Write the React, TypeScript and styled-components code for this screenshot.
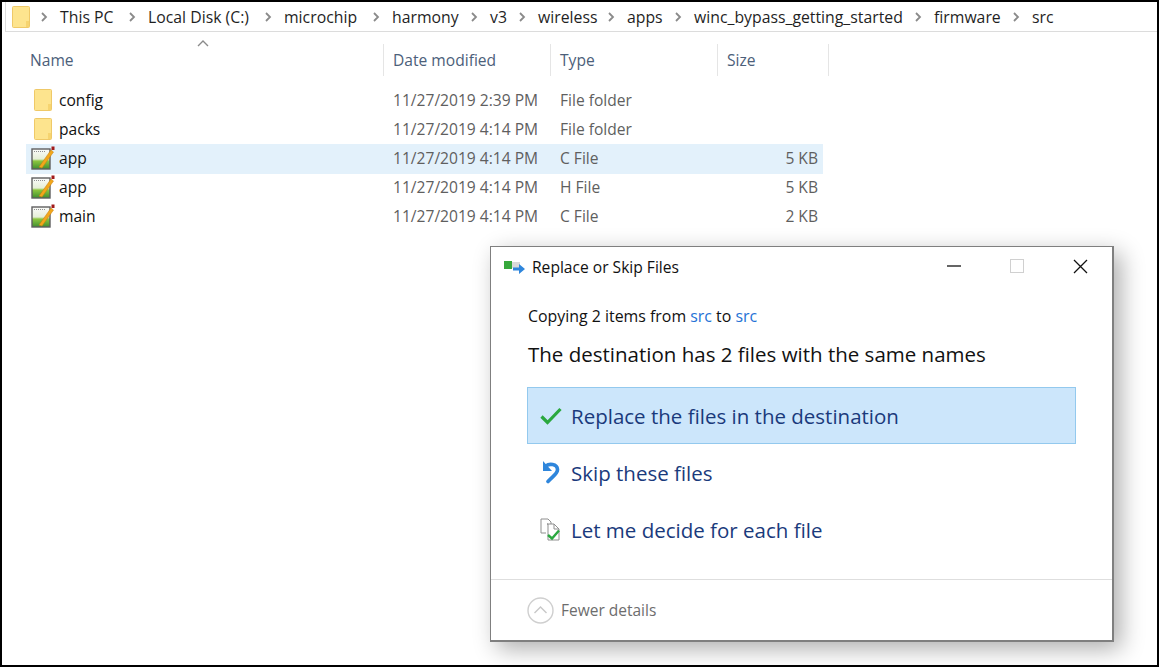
import React from 'react';
import styled, { createGlobalStyle } from 'styled-components';

const GlobalStyle = createGlobalStyle`
  html, body { margin: 0; padding: 0; background: #fff; }
  body { font-family: "Open Sans", "Liberation Sans", sans-serif; }
`;

const Frame = styled.div`
  width: 1159px;
  height: 667px;
  box-sizing: border-box;
  border: 2px solid #000;
  background: #fff;
  position: relative;
  overflow: hidden;
`;

const AddressBar = styled.div`
  height: 30px;
  margin-left: 3px;
  box-sizing: border-box;
  border: 1px solid #dcdcdc;
  border-top: 0;
  border-right: 0;
  display: flex;
  align-items: center;
  padding-left: 6px;
  font-size: 15.8px;
  color: #1f1f1f;
`;

const Crumb = styled.span<{ $w: number }>`
  width: ${(p) => p.$w}px;
  flex: none;
  white-space: nowrap;
`;

const RootFolder = styled.div`
  display: flex;
  margin-right: -2px;
`;

const HeaderRow = styled.div`
  display: flex;
  height: 32px;
  margin-top: 12px;
  position: relative;
`;

const HeaderCell = styled.div<{ $w: number; $pad?: number }>`
  width: ${(p) => p.$w}px;
  box-sizing: border-box;
  padding-left: ${(p) => p.$pad ?? 9}px;
  border-right: 1px solid #e5e5e5;
  font-size: 15.6px;
  color: #4c607a;
  display: flex;
  align-items: center;
`;

const SortCaret = styled.svg`
  position: absolute;
  left: 195px;
  top: -4px;
`;

const FileList = styled.div`
  margin: 10px 0 0 24px;
  width: 797px;
`;

const FileRow = styled.div<{ $selected?: boolean }>`
  display: flex;
  align-items: center;
  height: 29px;
  box-sizing: border-box;
  padding-bottom: 2px;
  background: ${(p) => (p.$selected ? '#e3f1fb' : 'transparent')};
  box-shadow: ${(p) => (p.$selected ? '0 1px 0 #e3f1fb' : 'none')};
  font-size: 15.6px;
`;

const IconSlot = styled.div<{ $folder?: boolean }>`
  width: 33px;
  padding-left: ${(p) => (p.$folder ? 8 : 5)}px;
  box-sizing: border-box;
  display: flex;
  align-items: center;
`;

const NameCell = styled.div`
  width: 334px;
  color: #111;
`;

const MetaCell = styled.div<{ $w: number; $right?: boolean }>`
  width: ${(p) => p.$w}px;
  color: #5f5f5f;
  text-align: ${(p) => (p.$right ? 'right' : 'left')};
  white-space: nowrap;
`;

const Dialog = styled.div`
  position: absolute;
  left: 488px;
  top: 244px;
  width: 624px;
  height: 396px;
  box-sizing: border-box;
  border: 1px solid #7f7f7f;
  border-right-width: 2px;
  border-bottom-width: 2px;
  background: #fff;
  box-shadow: 7px 7px 22px rgba(0, 0, 0, 0.32);
  display: flex;
  flex-direction: column;
`;

const TitleBar = styled.div`
  height: 40px;
  flex: none;
  display: flex;
  align-items: center;
  padding-left: 13px;
  font-size: 15.6px;
  color: #111;
`;

const TitleText = styled.span`
  margin-left: 6px;
  flex: 1;
`;

const WindowButton = styled.div<{ $nudge?: number }>`
  width: 64px;
  box-sizing: border-box;
  padding-left: ${(p) => p.$nudge ?? 0}px;
  display: flex;
  justify-content: center;
  margin-bottom: 2px;
`;

const Body = styled.div`
  flex: 1;
  padding: 18px 36px 0 36px;
`;

const CopyLine = styled.div`
  font-size: 15.9px;
  color: #111;
  line-height: 22px;
  margin-left: 1px;
`;

const Link = styled.span`
  color: #2472d6;
`;

const Heading = styled.div`
  font-size: 20.5px;
  color: #111;
  line-height: 28px;
  margin: 13px 0 0 1px;
`;

const Choices = styled.div`
  margin-top: 19px;
`;

const Choice = styled.div<{ $active?: boolean }>`
  height: 57px;
  box-sizing: border-box;
  display: flex;
  align-items: center;
  font-size: 20.5px;
  color: #1a3a7c;
  padding-left: 12px;
  background: ${(p) => (p.$active ? '#cce6fb' : 'transparent')};
  border: 1px solid ${(p) => (p.$active ? '#93c9ee' : 'transparent')};
`;

const ChoiceIcon = styled.div`
  width: 31px;
  display: flex;
  align-items: center;
`;

const Footer = styled.div`
  height: 61px;
  flex: none;
  box-sizing: border-box;
  padding-left: 36px;
  border-top: 1px solid #dedede;
  display: flex;
  align-items: center;
  font-size: 15.5px;
  color: #6d6d6d;
  gap: 7px;
`;

const Folder = () => (
  <svg width="18" height="22" viewBox="0 0 18 22">
    <rect x="0.5" y="0.5" width="17" height="21" rx="1" fill="#fde48e" stroke="#efc968" />
    <rect x="14" y="15" width="3" height="6" fill="#f6d470" />
  </svg>
);

const NoteFile = () => (
  <svg width="24" height="24" viewBox="0 0 24 24">
    <defs>
      <linearGradient id="noteFill" x1="0" y1="0" x2="0" y2="1">
        <stop offset="0" stopColor="#fbfbfb" />
        <stop offset="0.5" stopColor="#e6efd8" />
        <stop offset="0.6" stopColor="#8cc63f" />
        <stop offset="1" stopColor="#3f8f2f" />
      </linearGradient>
    </defs>
    <rect x="1" y="3" width="18" height="20" fill="url(#noteFill)" stroke="#5f5f5f" strokeWidth="1.4" />
    <path d="M3 5.5h11" stroke="#8f8f8f" strokeDasharray="1 1" />
    <path d="M8 21 L20 4 L22.5 6 L11 22 Z" fill="#f2a71b" stroke="#c47d10" strokeWidth="0.5" />
    <rect x="20.5" y="0.5" width="3" height="3.5" fill="#a11a1a" />
  </svg>
);

const Chevron = () => (
  <svg width="32" height="12" viewBox="0 0 32 12">
    <path d="M14 2l4 4-4 4" fill="none" stroke="#8a8a8a" strokeWidth="1.8" />
  </svg>
);

const crumbs = [
  { label: 'This PC', width: 56 },
  { label: 'Local Disk (C:)', width: 104 },
  { label: 'microchip', width: 76 },
  { label: 'harmony', width: 66 },
  { label: 'v3', width: 16 },
  { label: 'wireless', width: 57 },
  { label: 'apps', width: 35 },
  { label: 'winc_bypass_getting_started', width: 208 },
  { label: 'firmware', width: 66 },
  { label: 'src', width: 24 },
];

const files = [
  { name: 'config', date: '11/27/2019 2:39 PM', type: 'File folder', size: '', folder: true },
  { name: 'packs', date: '11/27/2019 4:14 PM', type: 'File folder', size: '', folder: true },
  { name: 'app', date: '11/27/2019 4:14 PM', type: 'C File', size: '5 KB', selected: true },
  { name: 'app', date: '11/27/2019 4:14 PM', type: 'H File', size: '5 KB' },
  { name: 'main', date: '11/27/2019 4:14 PM', type: 'C File', size: '2 KB' },
];

export default function App() {
  return (
    <Frame>
      <GlobalStyle />
      <AddressBar>
        <RootFolder>
          <Folder />
        </RootFolder>
        {crumbs.map((c) => (
          <React.Fragment key={c.label}>
            <Chevron />
            <Crumb $w={c.width}>{c.label}</Crumb>
          </React.Fragment>
        ))}
      </AddressBar>
      <HeaderRow>
        <SortCaret width="12" height="7" viewBox="0 0 12 7">
          <path d="M1 6l5-5 5 5" fill="none" stroke="#8a8a8a" strokeWidth="1.4" />
        </SortCaret>
        <HeaderCell $w={382} $pad={28}>Name</HeaderCell>
        <HeaderCell $w={167}>Date modified</HeaderCell>
        <HeaderCell $w={167}>Type</HeaderCell>
        <HeaderCell $w={111}>Size</HeaderCell>
      </HeaderRow>
      <FileList>
        {files.map((f, i) => (
          <FileRow key={i} $selected={f.selected}>
            <IconSlot $folder={f.folder}>{f.folder ? <Folder /> : <NoteFile />}</IconSlot>
            <NameCell>{f.name}</NameCell>
            <MetaCell $w={167}>{f.date}</MetaCell>
            <MetaCell $w={100}>{f.type}</MetaCell>
            <MetaCell $w={158} $right>{f.size}</MetaCell>
          </FileRow>
        ))}
      </FileList>
      <Dialog>
        <TitleBar>
          <svg width="22" height="14" viewBox="0 0 22 14">
            <rect x="0" y="1" width="8" height="8" fill="#36a83c" />
            <rect x="8" y="2" width="8" height="6" fill="#d9d9d9" />
            <path d="M9 7.5h6V4l6 5-6 5v-3.5H9z" fill="#2f86dc" />
          </svg>
          <TitleText>Replace or Skip Files</TitleText>
          <WindowButton $nudge={3}>
            <svg width="14" height="14" viewBox="0 0 14 14"><path d="M0 7h14" stroke="#111" strokeWidth="1.3" /></svg>
          </WindowButton>
          <WindowButton $nudge={1}>
            <svg width="14" height="14" viewBox="0 0 14 14"><rect x="0.5" y="0.5" width="13" height="13" fill="none" stroke="#d0d0d0" /></svg>
          </WindowButton>
          <WindowButton>
            <svg width="15" height="15" viewBox="0 0 15 15"><path d="M1 1l13 13M14 1L1 14" stroke="#111" strokeWidth="1.3" /></svg>
          </WindowButton>
        </TitleBar>
        <Body>
          <CopyLine>Copying 2 items from <Link>src</Link> to <Link>src</Link></CopyLine>
          <Heading>The destination has 2 files with the same names</Heading>
          <Choices>
            <Choice $active>
              <ChoiceIcon>
                <svg width="22" height="18" viewBox="0 0 22 18"><path d="M1.5 9.5l6 6L20.5 2" fill="none" stroke="#2aa83f" strokeWidth="3.2" /></svg>
              </ChoiceIcon>
              Replace the files in the destination
            </Choice>
            <Choice>
              <ChoiceIcon>
                <svg width="20" height="23" viewBox="0 0 20 23">
                  <path d="M3 0 L3 10 L12 10 Z" fill="#2f86dc" />
                  <path d="M6 5 C9 2.5 17 2.5 17.5 8.5 C17.8 12.5 13 15 8 20.5" fill="none" stroke="#2f86dc" strokeWidth="3.6" strokeLinecap="round" />
                </svg>
              </ChoiceIcon>
              Skip these files
            </Choice>
            <Choice>
              <ChoiceIcon>
                <svg width="22" height="23" viewBox="0 0 22 23">
                  <path d="M1 1h7l3 3v3M1 1v14h5" fill="none" stroke="#8f8f8f" />
                  <path d="M7 6h7l5 5v11H8V6z" fill="#fff" stroke="#8f8f8f" />
                  <path d="M14 6v5h5" fill="none" stroke="#8f8f8f" />
                  <path d="M8 17l4 3.5 7-8" fill="none" stroke="#2aa83f" strokeWidth="2.4" />
                </svg>
              </ChoiceIcon>
              Let me decide for each file
            </Choice>
          </Choices>
        </Body>
        <Footer>
          <svg width="27" height="27" viewBox="0 0 27 27">
            <circle cx="13.5" cy="13.5" r="12.5" fill="none" stroke="#cfcfcf" strokeWidth="1.4" />
            <path d="M7.5 16l6-6 6 6" fill="none" stroke="#c8c8c8" strokeWidth="1.4" />
          </svg>
          Fewer details
        </Footer>
      </Dialog>
    </Frame>
  );
}
